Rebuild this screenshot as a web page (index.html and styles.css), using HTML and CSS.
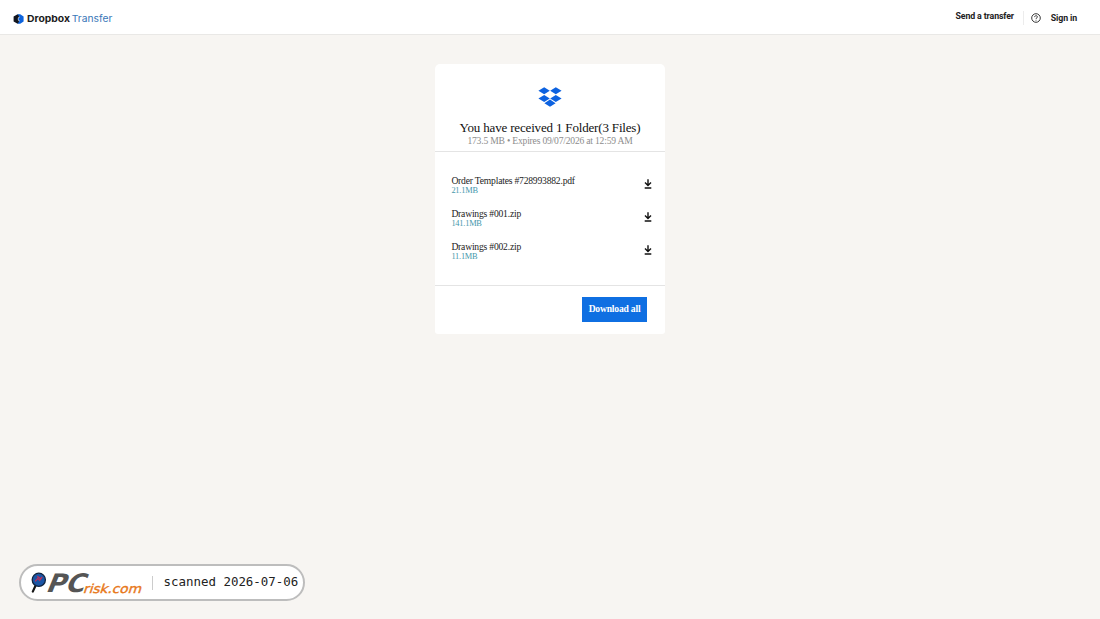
FILE: index.html
```html
<!DOCTYPE html>
<html lang="en">
<head>
    <meta charset="UTF-8">
    <meta name="viewport" content="width=device-width, initial-scale=1.0">
    <title>Transfer</title>
    <link rel="stylesheet" href="styles.css">
</head>
<body>
    <header class="topbar">
        <svg class="brand" width="102" height="16" viewBox="0 0 102 16">
            <path d="M4.6 3.2 L0.6 5.5 V10.5 L4.6 12.8 L6.6 11.4 L4.6 8 L6.6 4.6 Z" fill="#12161f"/>
            <path d="M4.6 3.2 H7.2 L10.6 5.5 V10.5 L7.2 12.8 H4.6 L6.6 9.8 L5 8 L6.6 6.2 Z" fill="#0d63dc"/>
            <text class="brand-name" x="14" y="11.4" textLength="43" lengthAdjust="spacingAndGlyphs">Dropbox</text>
            <text class="brand-product" x="58.8" y="11.4" textLength="40.5" lengthAdjust="spacingAndGlyphs">Transfer</text>
        </svg>
        <nav class="nav">
            <a class="nav-send">Send a transfer</a>
            <span class="nav-line"></span>
            <svg class="nav-help" width="10" height="10" viewBox="0 0 10 10">
                <circle cx="5" cy="5" r="4.3"/>
                <path d="M3.6 4.1 C3.6 2.2 6.5 2.3 6.4 4 C6.4 4.9 5 4.9 5 5.9 M5 6.8 V7.6"/>
            </svg>
            <a class="nav-sign">Sign in</a>
        </nav>
    </header>

    <main class="card">
        <div class="card-head">
            <svg class="box-logo" width="24" height="20" viewBox="0 0 24 20">
                <path d="M6.2 0.3 L11.8 3.8 L6.2 7.3 L0.4 3.8 Z M17.8 0.3 L23.6 3.8 L17.8 7.3 L12.2 3.8 Z M6.2 7.9 L11.8 11.4 L6.2 14.9 L0.4 11.4 Z M17.8 7.9 L23.6 11.4 L17.8 14.9 L12.2 11.4 Z M12 12.6 L17.6 16.2 L12 19.8 L6.4 16.2 Z"/>
            </svg>
            <h1 class="title">You have received 1 Folder(3 Files)</h1>
            <p class="meta">173.5 MB • Expires 09/07/2026 at 12:59 AM</p>
        </div>
        <ul class="files">
            <li class="file">
                <div>
                    <div class="file-name">Order Templates #728993882.pdf</div>
                    <div class="file-size">21.1MB</div>
                </div>
                <svg class="get" width="8" height="10" viewBox="0 0 8 10"><path d="M4 0.3 V6.4 M1 3.6 L4 6.6 L7 3.6 M0.7 9 H7.3"/></svg>
            </li>
            <li class="file">
                <div>
                    <div class="file-name">Drawings #001.zip</div>
                    <div class="file-size">141.1MB</div>
                </div>
                <svg class="get" width="8" height="10" viewBox="0 0 8 10"><path d="M4 0.3 V6.4 M1 3.6 L4 6.6 L7 3.6 M0.7 9 H7.3"/></svg>
            </li>
            <li class="file">
                <div>
                    <div class="file-name">Drawings #002.zip</div>
                    <div class="file-size">11.1MB</div>
                </div>
                <svg class="get" width="8" height="10" viewBox="0 0 8 10"><path d="M4 0.3 V6.4 M1 3.6 L4 6.6 L7 3.6 M0.7 9 H7.3"/></svg>
            </li>
        </ul>
        <div class="card-foot">
            <button class="download">Download all</button>
        </div>
    </main>

    <div class="stamp">
        <svg class="stamp-logo" width="114" height="34" viewBox="0 0 114 34">
            <path d="M5.6 19.5 L2.8 25.6" stroke="#151515" stroke-width="2.2" stroke-linecap="round"/>
            <circle cx="8.8" cy="13.8" r="6.6" fill="#1b55a5" stroke="#10233f" stroke-width="1.3"/>
            <path d="M5.2 15.3 L7.7 12.3 L9.7 14.3 L12.2 10.8 M7.2 10.3 L10.7 12.8" fill="none" stroke="#c0305a" stroke-width="1.2"/>
            <text class="stamp-pc" transform="translate(15 26.2) skewX(-22)" textLength="38.5" lengthAdjust="spacingAndGlyphs">PC</text>
            <text class="stamp-risk" transform="translate(52.8 26.6) skewX(-18)" textLength="58" lengthAdjust="spacingAndGlyphs">risk.com</text>
        </svg>
        <span class="stamp-line"></span>
        <span class="stamp-text">scanned 2026-07-06</span>
    </div>
</body>
</html>
```
FILE: styles.css
```css
* {
    box-sizing: border-box;
}
body {
    margin: 0;
    height: 619px;
    overflow: hidden;
    background: #f7f5f2;
    font-family: "Liberation Serif", "Times New Roman", serif;
    display: flex;
    flex-direction: column;
}
.topbar {
    flex: none;
    height: 35px;
    padding: 0 23px 0 13px;
    background: #fff;
    border-bottom: 1px solid #e9e8e6;
    display: flex;
    justify-content: space-between;
}
.brand {
    margin-top: 11px;
}
.brand-name,
.brand-product {
    font-family: Inter, sans-serif;
    font-size: 9.2px;
}
.brand-name {
    font-weight: 700;
    fill: #1b1b1b;
}
.brand-product {
    fill: #3a78b8;
}
.nav {
    display: flex;
    align-items: flex-start;
    font: 700 8.8px/10px Roboto, sans-serif;
    letter-spacing: -0.13px;
    color: #222;
}
.nav-send {
    margin-top: 11px;
}
.nav-line {
    width: 1px;
    height: 14px;
    margin: 11px 7.5px 0 8.8px;
    background: #ececec;
}
.nav-help {
    margin-top: 13px;
    fill: none;
    stroke: #222;
    stroke-width: 0.9;
}
.nav-sign {
    margin: 13px 0 0 9.5px;
}

.card {
    flex: none;
    width: 230px;
    height: 270px;
    margin: 29px auto 0;
    background: #fff;
    border-radius: 5px 5px 3px 3px;
    display: flex;
    flex-direction: column;
}
.card-head {
    height: 88px;
    padding-top: 23px;
    border-bottom: 1px solid #e4e4e4;
    text-align: center;
}
.box-logo {
    display: block;
    margin: 0 auto;
    fill: #0d62e0;
}
.title {
    margin: 14px 0 0;
    font-size: 13px;
    font-weight: 400;
    line-height: 14px;
    letter-spacing: -0.17px;
    color: #111;
}
.meta {
    margin: 0;
    font-size: 9.6px;
    line-height: 11px;
    letter-spacing: -0.2px;
    color: #8d8d8d;
}
.files {
    margin: 0;
    padding: 23.2px 13px 0 16.4px;
    height: 134px;
    border-bottom: 1px solid #e4e4e4;
    list-style: none;
}
.file {
    height: 32.7px;
    display: flex;
    justify-content: space-between;
    align-items: flex-start;
}
.file-name {
    font-size: 9.6px;
    line-height: 11px;
    letter-spacing: -0.2px;
    color: #222;
}
.file-size {
    font-size: 8.4px;
    line-height: 9.4px;
    letter-spacing: -0.22px;
    color: #4598ab;
}
.get {
    margin-top: 4px;
    fill: none;
    stroke: #111;
    stroke-width: 1.4;
}
.card-foot {
    display: flex;
    justify-content: flex-end;
    padding: 11px 18px 0 0;
}
.download {
    width: 65px;
    height: 24.5px;
    padding: 0;
    border: 0;
    background: #0f6fe2;
    color: #fff;
    font: 700 9.6px/24.5px "Liberation Serif", "Times New Roman", serif;
    letter-spacing: -0.2px;
}

.stamp {
    width: 286px;
    height: 37px;
    margin: auto 0 18px 18.5px;
    padding-left: 9px;
    background: #fff;
    border: 2px solid #bdbdbd;
    border-radius: 19px;
    display: flex;
    align-items: center;
}
.stamp-logo {
    flex: none;
}
.stamp-pc {
    font: 700 25.5px "DejaVu Sans", sans-serif;
    fill: #555;
}
.stamp-risk {
    font: 400 12.4px "DejaVu Sans", sans-serif;
    fill: #e8791c;
    stroke: #e8791c;
    stroke-width: 0.4;
}
.stamp-line {
    width: 1px;
    height: 14px;
    margin: 0 10.5px 0 8.5px;
    background: #ccc;
}
.stamp-text {
    margin-top: -2px;
    font: 12.45px/16px "DejaVu Sans Mono", monospace;
    color: #222;
    white-space: nowrap;
}
```
